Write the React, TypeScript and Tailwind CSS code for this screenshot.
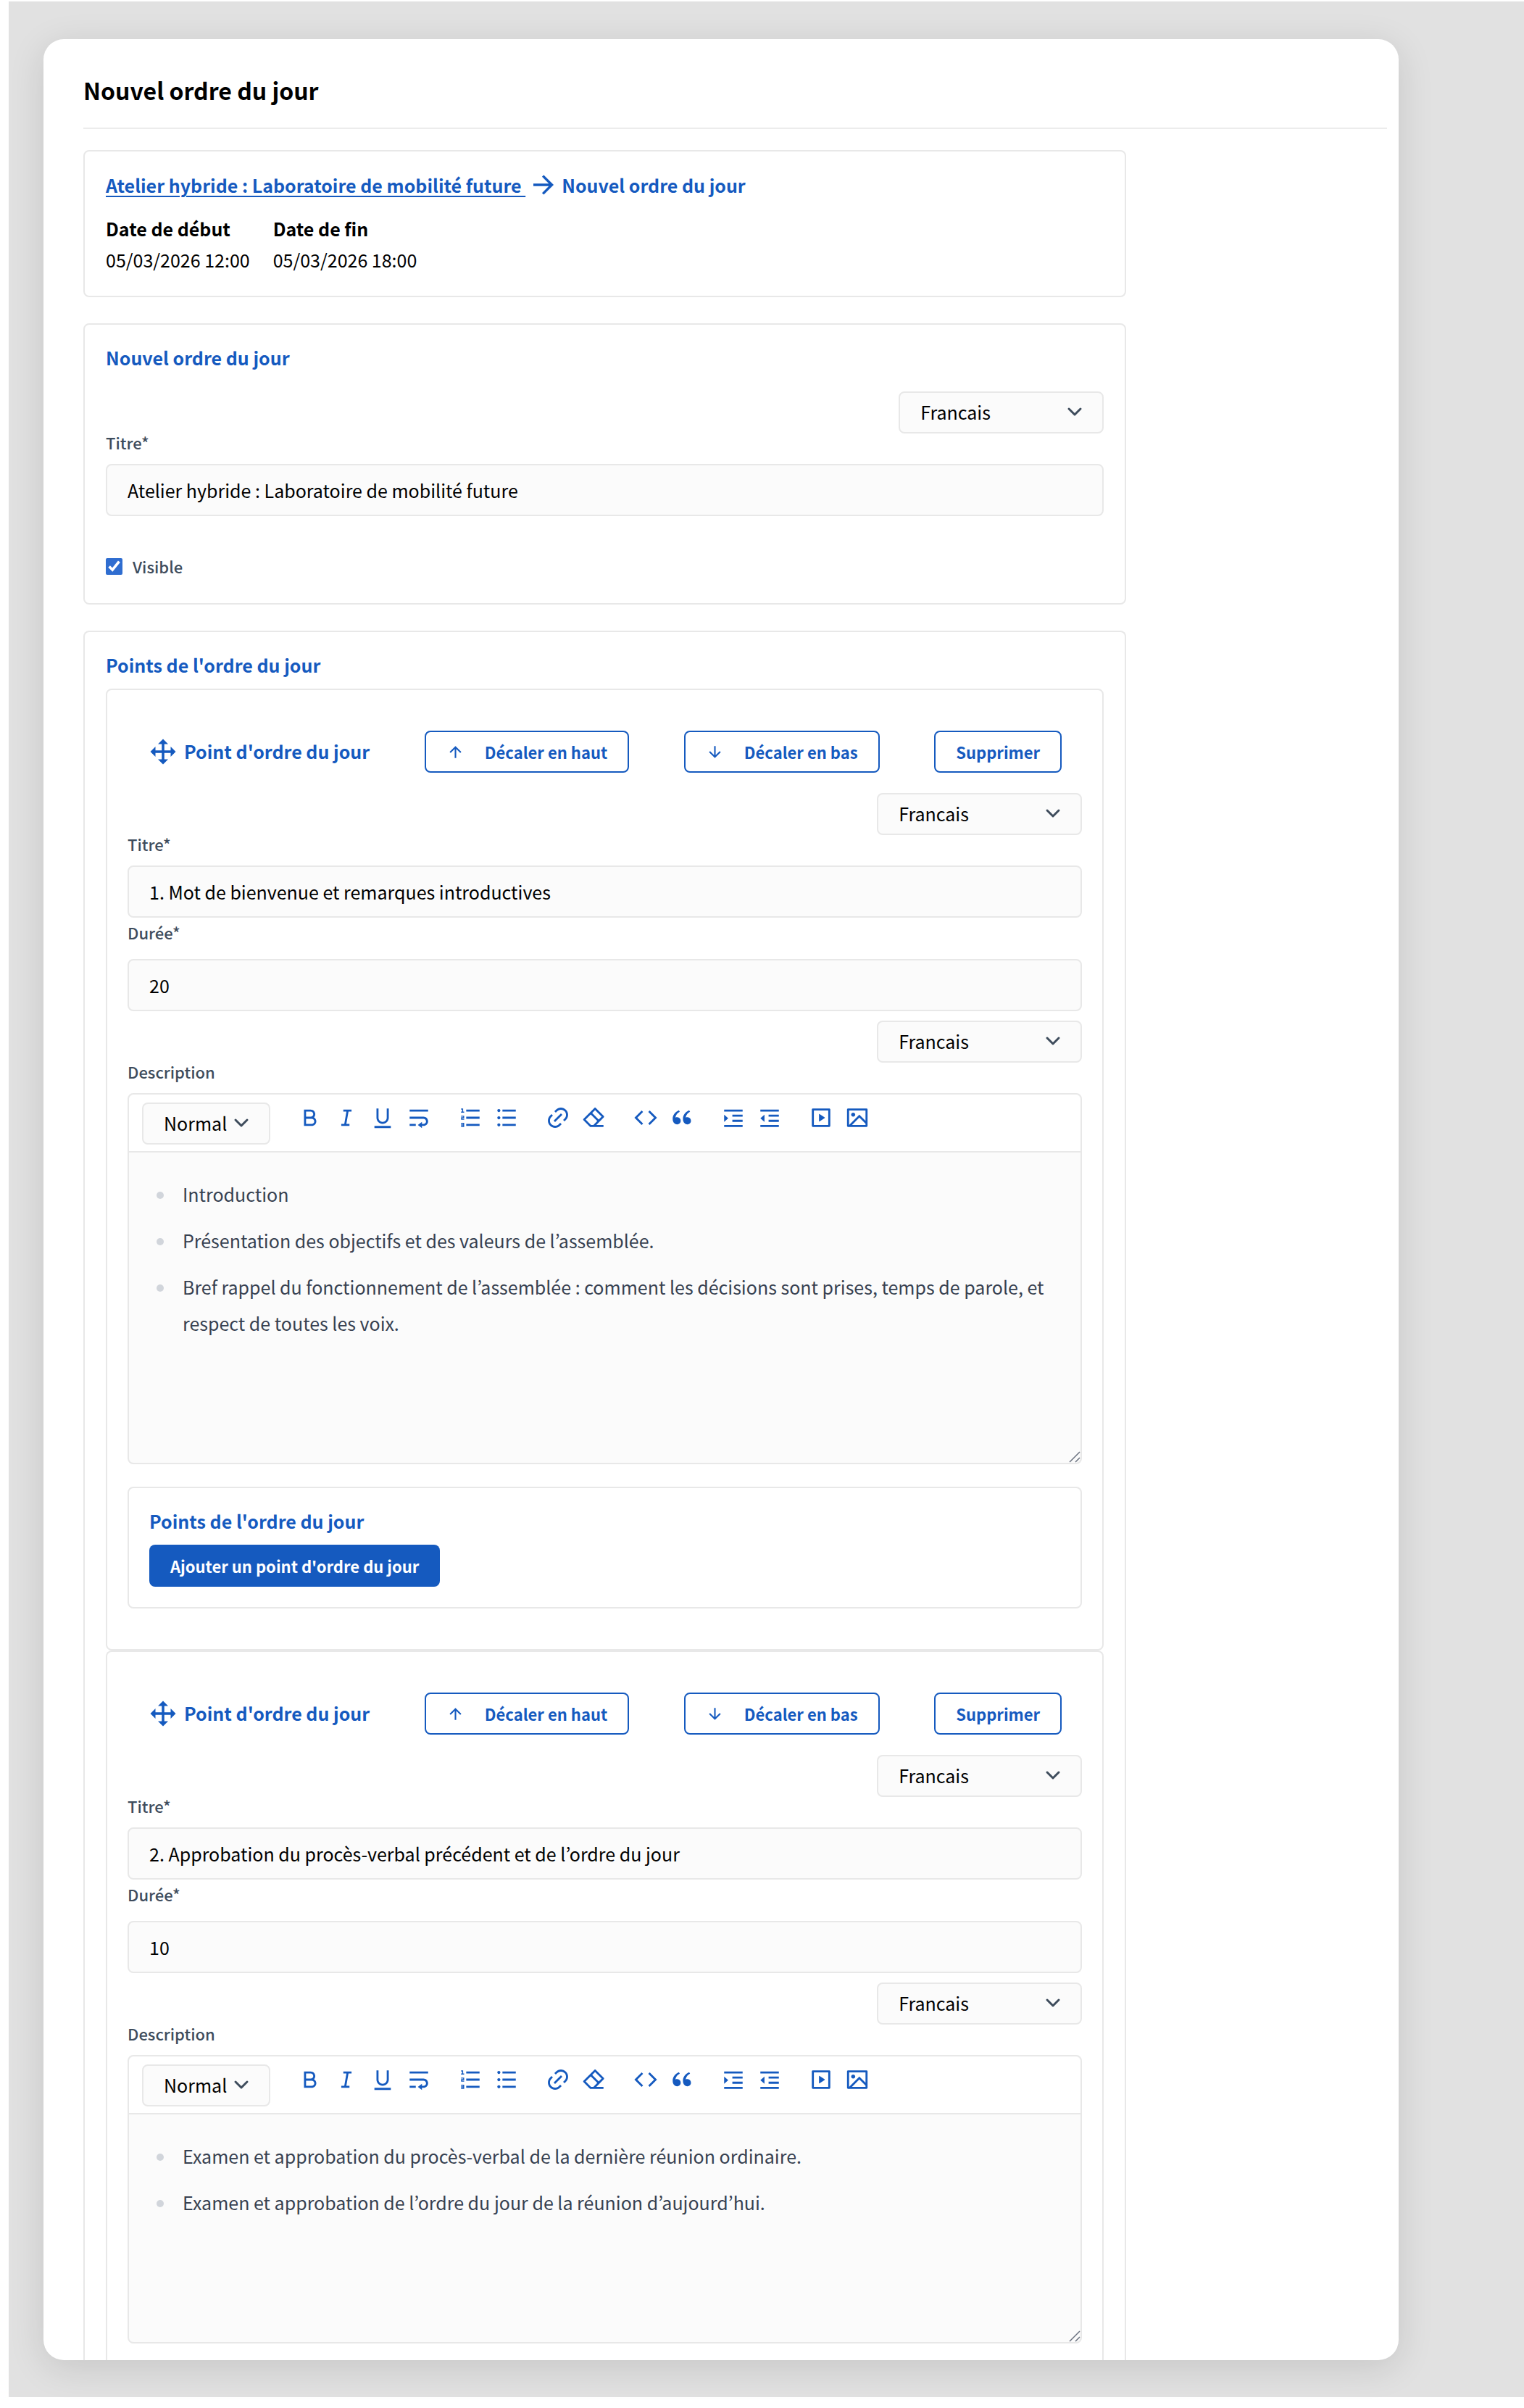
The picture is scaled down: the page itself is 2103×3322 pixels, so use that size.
import { useId } from "react";
import type { ReactNode } from "react";
import type { IconType } from "react-icons";
import {
  RiArrowDownLine,
  RiArrowRightLine,
  RiArrowUpLine,
  RiBold,
  RiCodeLine,
  RiDoubleQuotesL,
  RiDragMove2Fill,
  RiEraserLine,
  RiImageLine,
  RiIndentDecrease,
  RiIndentIncrease,
  RiItalic,
  RiLink,
  RiListOrdered,
  RiListUnordered,
  RiTextWrap,
  RiUnderline,
  RiVideoLine,
} from "react-icons/ri";

type AgendaItem = {
  title: string;
  duration: number;
  points: string[];
};

const agendaItems: AgendaItem[] = [
  {
    title: "1. Mot de bienvenue et remarques introductives",
    duration: 20,
    points: [
      "Introduction",
      "Présentation des objectifs et des valeurs de l’assemblée.",
      "Bref rappel du fonctionnement de l’assemblée : comment les décisions sont prises, temps de parole, et respect de toutes les voix.",
    ],
  },
  {
    title: "2. Approbation du procès-verbal précédent et de l’ordre du jour",
    duration: 10,
    points: [
      "Examen et approbation du procès-verbal de la dernière réunion ordinaire.",
      "Examen et approbation de l’ordre du jour de la réunion d’aujourd’hui.",
    ],
  },
];

const toolGroups: [string, IconType][][] = [
  [
    ["Gras", RiBold],
    ["Italique", RiItalic],
    ["Souligné", RiUnderline],
    ["Saut de ligne", RiTextWrap],
  ],
  [
    ["Liste ordonnée", RiListOrdered],
    ["Liste à puces", RiListUnordered],
  ],
  [
    ["Lien", RiLink],
    ["Effacer la mise en forme", RiEraserLine],
  ],
  [
    ["Code", RiCodeLine],
    ["Citation", RiDoubleQuotesL],
  ],
  [
    ["Augmenter le retrait", RiIndentIncrease],
    ["Diminuer le retrait", RiIndentDecrease],
  ],
  [
    ["Vidéo", RiVideoLine],
    ["Image", RiImageLine],
  ],
];

function Chevron() {
  return (
    <svg
      viewBox="0 0 20 20"
      fill="none"
      stroke="#3e4c5c"
      strokeWidth="1.5"
      strokeLinecap="round"
      strokeLinejoin="round"
      className="pointer-events-none absolute top-2 right-5 size-10"
      aria-hidden="true"
    >
      <path d="M6 8l4 4 4-4" />
    </svg>
  );
}

function Dropdown({ label, options, width }: { label: string; options: string[]; width: string }) {
  return (
    <div className={`relative ${width}`}>
      <select
        aria-label={label}
        className="h-[58px] w-full appearance-none rounded-lg border-2 border-[#e8e8e8] bg-[#fbfbfb] pl-7 text-[25px] text-black"
      >
        {options.map((option) => (
          <option key={option}>{option}</option>
        ))}
      </select>
      <Chevron />
    </div>
  );
}

function LanguageSelect() {
  return (
    <div className="flex justify-end">
      <Dropdown label="Langue" options={["Francais"]} width="w-[283px]" />
    </div>
  );
}

function Field({ label, value, type = "text", gap }: { label: string; value: string; type?: string; gap: string }) {
  const id = useId();
  return (
    <div className={`flex flex-col ${gap}`}>
      <label htmlFor={id} className="text-[22px] leading-6 font-medium text-[#3e4c5c]">
        {label}
      </label>
      <input
        id={id}
        type={type}
        defaultValue={value}
        className="h-[72px] w-full rounded-lg border-2 border-[#e8e8e8] bg-[#fbfbfb] px-7 text-[25px] text-black"
      />
    </div>
  );
}

function SectionTitle({ children }: { children: ReactNode }) {
  return <h2 className="text-[25px] leading-[42px] font-bold text-[#155abf]">{children}</h2>;
}

function OutlineButton({ icon: Icon, children }: { icon?: IconType; children: ReactNode }) {
  return (
    <button
      type="button"
      className="flex h-[58px] items-center gap-7 rounded-lg border-2 border-[#155abf] px-7 text-[22px] font-bold text-[#155abf]"
    >
      {Icon && <Icon className="size-[25px]" aria-hidden="true" />}
      {children}
    </button>
  );
}

function Editor({ points }: { points: string[] }) {
  const id = useId();
  return (
    <div>
      <div id={id} className="text-[22px] leading-6 font-medium text-[#3e4c5c]">
        Description
      </div>
      <div className="relative mt-[18px] rounded-lg border-2 border-[#e8e8e8] bg-[#fbfbfb]">
        <div className="flex flex-wrap items-start rounded-t-lg border-b-2 border-[#e8e8e8] bg-white pt-[11px] pb-[9px] pl-[18px]">
          <Dropdown label="Style du texte" options={["Normal"]} width="w-[177px]" />
          <div className="flex gap-[21px] pt-1 pl-[30px]">
            {toolGroups.map((group) => (
              <div key={group[0][0]} className="flex">
                {group.map(([name, Icon]) => (
                  <button
                    key={name}
                    type="button"
                    aria-label={name}
                    className="flex w-[50px] justify-center text-[#155abf]"
                  >
                    <Icon className="size-[34px]" aria-hidden="true" />
                  </button>
                ))}
              </div>
            ))}
          </div>
        </div>
        <div
          role="textbox"
          aria-multiline="true"
          aria-labelledby={id}
          contentEditable
          suppressContentEditableWarning
          spellCheck={false}
          className="pt-8 pr-5 pb-[168px] pl-16 text-[25px] leading-[50px] text-[#374151]"
        >
          <ul className="flex list-disc flex-col gap-3.5">
            {points.map((point) => (
              <li key={point} className="pl-2.5 marker:text-[#d1d5db]">
                {point}
              </li>
            ))}
          </ul>
        </div>
        <svg
          viewBox="0 0 16 16"
          className="absolute right-0 bottom-0 size-4"
          stroke="#6b7280"
          strokeWidth="1.5"
          aria-hidden="true"
        >
          <path d="M1 15L15 1M9 15L15 9" />
        </svg>
      </div>
    </div>
  );
}

function AgendaCard({ item, last }: { item: AgendaItem; last: boolean }) {
  return (
    <article
      className={
        last
          ? "rounded-t-lg border-2 border-b-0 border-[#e8e8e8] px-7 pt-14 pb-[23px]"
          : "rounded-lg border-2 border-[#e8e8e8] px-7 pt-14 pb-14"
      }
    >
      <div className="flex items-center justify-between px-7">
        <h3 className="flex items-center gap-2 text-[25px] font-bold text-[#155abf]">
          <RiDragMove2Fill className="size-[42px]" aria-hidden="true" />
          Point d'ordre du jour
        </h3>
        <OutlineButton icon={RiArrowUpLine}>Décaler en haut</OutlineButton>
        <OutlineButton icon={RiArrowDownLine}>Décaler en bas</OutlineButton>
        <OutlineButton>Supprimer</OutlineButton>
      </div>
      <div className="mt-7">
        <LanguageSelect />
        <Field label="Titre*" value={item.title} gap="gap-[18px]" />
      </div>
      <div className="mt-2">
        <Field label="Durée*" value={String(item.duration)} gap="gap-[25px]" />
      </div>
      <div className="mt-[13px]">
        <LanguageSelect />
        <Editor points={item.points} />
      </div>
      {!last && (
        <section className="mt-[31px] rounded-lg border-2 border-[#e8e8e8] px-7 pt-6 pb-7">
          <SectionTitle>Points de l'ordre du jour</SectionTitle>
          <button
            type="button"
            className="mt-3 h-[58px] rounded-lg bg-[#155abf] px-[29px] text-[22px] font-bold text-white"
          >
            Ajouter un point d'ordre du jour
          </button>
        </section>
      )}
    </article>
  );
}

export default function App() {
  return (
    <div className="bg-white pt-0.5 pb-[15px] pl-3 font-['Noto_Sans_CJK_KR','Noto_Sans',sans-serif] text-black">
      <div className="bg-[#e1e1e1] pt-[52px] pr-[173px] pb-[51px] pl-12">
        <main className="rounded-[28px] bg-white pt-[46px] pr-4 pl-[55px] shadow-[0_10px_50px_rgba(0,0,0,0.12)]">
          <h1 className="border-b-2 border-[#ececec] pb-7 text-[32px] leading-[48px] font-bold">
            Nouvel ordre du jour
          </h1>

          <form className="mt-[29px] flex w-4/5 flex-col gap-9">
            <section className="rounded-lg border-2 border-[#e8e8e8] px-[29px] pt-[25px] pb-7">
              <nav
                aria-label="Fil d'Ariane"
                className="flex items-center gap-1 text-[25px] leading-[42px] font-bold text-[#155abf]"
              >
                <a href="#atelier" className="whitespace-pre underline decoration-2 underline-offset-4">
                  {"Atelier hybride : Laboratoire de mobilité future "}
                </a>
                <RiArrowRightLine className="size-[42px]" aria-hidden="true" />
                <span>Nouvel ordre du jour</span>
              </nav>
              <dl className="mt-[18px] flex gap-8 text-[25px] leading-[43px]">
                <div>
                  <dt className="font-bold">Date de début</dt>
                  <dd>05/03/2026 12:00</dd>
                </div>
                <div>
                  <dt className="font-bold">Date de fin</dt>
                  <dd>05/03/2026 18:00</dd>
                </div>
              </dl>
            </section>

            <section className="rounded-lg border-2 border-[#e8e8e8] px-[29px] pt-6 pb-[39px]">
              <SectionTitle>Nouvel ordre du jour</SectionTitle>
              <div className="mt-[26px]">
                <LanguageSelect />
                <Field
                  label="Titre*"
                  value="Atelier hybride : Laboratoire de mobilité future"
                  gap="gap-[18px]"
                />
              </div>
              <label className="mt-[57px] flex items-center gap-3.5 text-[22px] leading-6 font-medium text-[#3e4c5c]">
                <input type="checkbox" defaultChecked className="size-[23px] accent-[#2f6dd0]" />
                Visible
              </label>
            </section>

            <section className="rounded-t-lg border-2 border-b-0 border-[#e8e8e8] px-[29px] pt-6">
              <SectionTitle>Points de l'ordre du jour</SectionTitle>
              <div className="mt-3">
                {agendaItems.map((item, index) => (
                  <AgendaCard key={item.title} item={item} last={index === agendaItems.length - 1} />
                ))}
              </div>
            </section>
          </form>
        </main>
      </div>
    </div>
  );
}
